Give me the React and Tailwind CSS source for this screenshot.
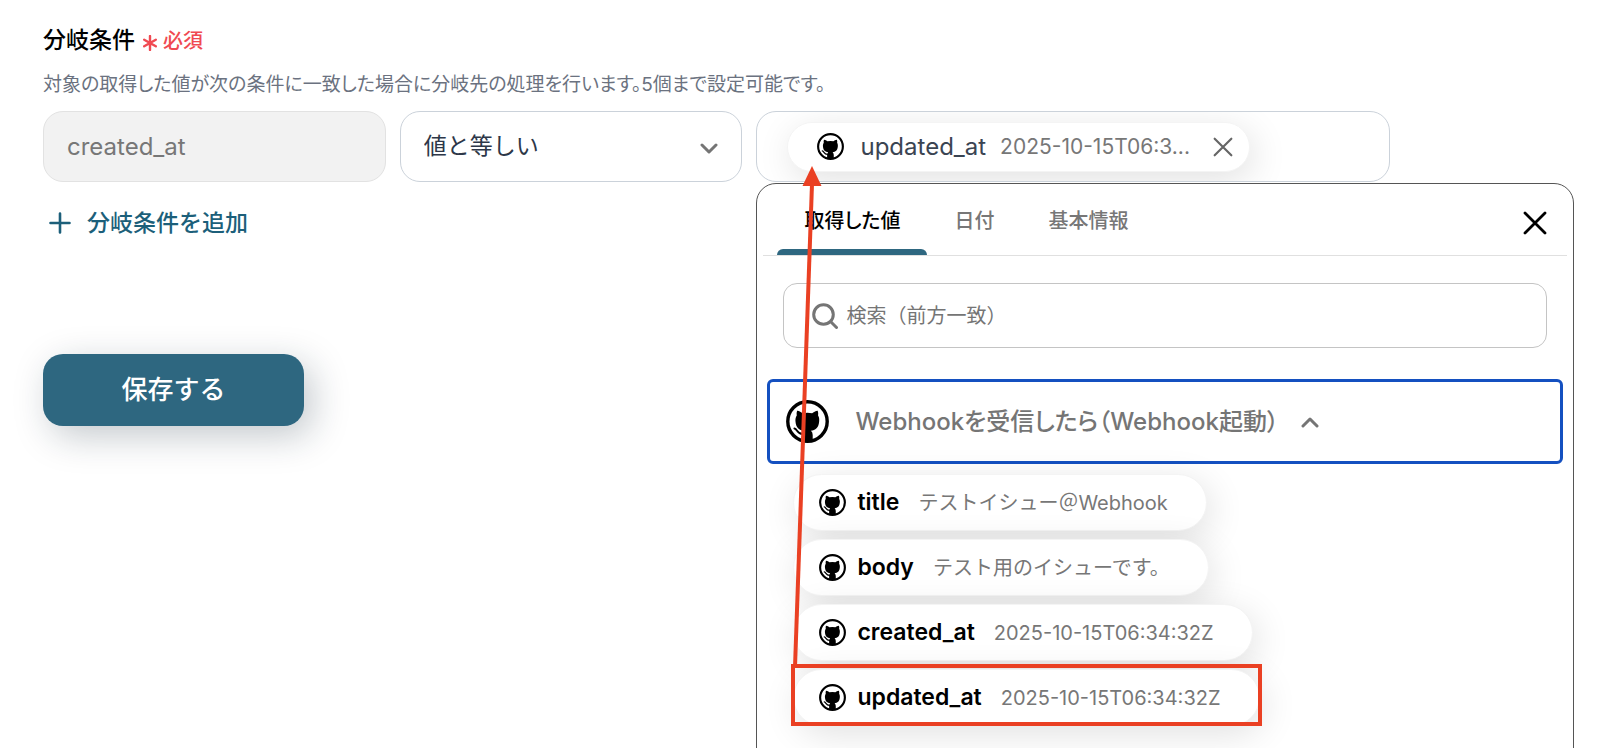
import React from "react";

const chips = [
  { name: "title", value: "テストイシュー＠Webhook" },
  { name: "body", value: "テスト用のイシューです。" },
  { name: "created_at", value: "2025-10-15T06:34:32Z" },
  { name: "updated_at", value: "2025-10-15T06:34:32Z" },
];

function GithubIcon({ className }) {
  return (
    <svg viewBox="0 0 24 24" className={className} aria-hidden="true">
      <circle cx="12" cy="12" r="11" fill="#fff" stroke="#000" strokeWidth="1.9" />
      <path d="M6.200 6C7.200 5.900 8.600 6.900 9.200 7.400Q12 6.900 14.600 7.400C15.300 6.900 16.700 5.900 17.700 6Q18.200 7.400 17.900 8.700C18.600 9.800 18.600 11 18.500 12C18.300 15.400 16.400 16.800 13.900 17.200Q14.900 18 14.900 19.600V23H9V19.600Q9 18 9.900 17.200C7.400 16.800 5.500 15.400 5.300 12C5.200 11 5.300 9.800 6 8.700Q5.700 7.400 6.200 6z" />
      <path d="M4.700 15.900C6.400 16.200 6.200 19.200 9.400 19" fill="none" stroke="#000" strokeWidth="1.1" strokeLinecap="round" />
    </svg>
  );
}

function Cross({ className, width }) {
  return (
    <svg viewBox="0 0 24 24" className={className} fill="none" stroke="currentColor" strokeWidth={width} strokeLinecap="round" aria-hidden="true">
      <path d="M2 2 22 22M22 2 2 22" />
    </svg>
  );
}

function Chevron({ className }) {
  return (
    <svg viewBox="0 0 18 12" className={className} fill="none" stroke="currentColor" strokeWidth="3" strokeLinecap="round" strokeLinejoin="round" aria-hidden="true">
      <path d="M2 2l7 7 7-7" />
    </svg>
  );
}

function ValuePanel() {
  return (
    <div className="absolute top-full left-0 -right-46 mt-px h-[640px] rounded-[20px] border border-[#555] bg-white px-1.5 text-xl">
      <div className="flex h-[72px] items-stretch justify-between border-b border-[#e0e0e0] pt-1.5 pr-5 pl-3.5">
        <div role="tablist" className="flex font-medium text-[#777] [font-feature-settings:'palt']">
          <button role="tab" aria-selected="true" className="relative px-[27px] pb-1 text-black">
            取得した値
            <span className="absolute inset-x-0 bottom-0 h-1.5 rounded-t-md bg-[#2e6780]" />
          </button>
          <button role="tab" aria-selected="false" className="px-[27px] pb-1">日付</button>
          <button role="tab" aria-selected="false" className="px-[27px] pb-1">基本情報</button>
        </div>
        <button aria-label="閉じる" className="flex items-center">
          <Cross className="size-6" width="2.8" />
        </button>
      </div>

      <div className="mx-5 mt-[27px] flex h-[65px] items-center gap-2 rounded-[14px] border border-[#c4c4c4] pl-7 text-[#757575]">
        <svg viewBox="0 0 26 26" className="size-[26px] shrink-0" fill="none" stroke="currentColor" strokeWidth="3" strokeLinecap="round" aria-hidden="true">
          <circle cx="11.5" cy="11.5" r="9.8" />
          <path d="M18.8 18.8 24.5 24.5" />
        </svg>
        <input aria-label="検索" placeholder="検索（前方一致）" className="w-full bg-transparent outline-none placeholder:text-[#757575]" />
      </div>

      <button className="mt-[31px] ml-1 flex h-[85px] w-[calc(100%-8px)] items-center rounded-[6px] border-3 border-[#1450c0] pl-4 text-2xl font-medium text-[#757575]">
        <GithubIcon className="mr-[26px] size-[43px]" />
        <span className="[font-feature-settings:'palt']">Webhookを受信したら（Webhook起動）</span>
        <Chevron className="ml-[22px] h-3 w-[18px] rotate-180" />
      </button>

      <ul className="mt-2.5 flex flex-col items-start gap-2 pl-[30px]">
        {chips.map((c) => (
          <li key={c.name}>
            <button className="flex h-[57px] items-center rounded-full border border-[#f4f4f4] bg-white pr-[38px] pl-[25px] shadow-[4px_8px_36px_rgba(0,0,0,0.12)]">
              <GithubIcon className="mr-[11px] size-[27px]" />
              <span className="text-[23px] font-semibold text-black">{c.name}</span>
              <span className="ml-[19px] text-[#777]">{c.value}</span>
            </button>
          </li>
        ))}
      </ul>

      <svg viewBox="0 0 480 570" className="pointer-events-none absolute -top-5 left-8 h-[570px] w-[480px]" fill="none" stroke="#ea4023" strokeWidth="4" aria-hidden="true">
        <rect x="4" y="502" width="467" height="58" />
        <path d="M6 503 23 20" />
        <path d="M23 2 32.500 22H13.500z" fill="#ea4023" stroke="none" />
      </svg>
    </div>
  );
}

export default function App() {
  return (
    <main className="h-screen overflow-hidden bg-white pt-5 pr-[210px] pl-[43px] font-['Inter','Noto_Sans_CJK_JP',sans-serif]" lang="ja">
      <h1 className="flex h-10 items-center text-[23px] font-medium text-black">
        分岐条件
        <span className="ml-2 flex items-center gap-1.5 pt-px text-xl font-medium text-[#f04a52]">
          <svg viewBox="0 0 14 16" className="mt-1 h-4 w-3.5" fill="none" stroke="currentColor" strokeWidth="2.4" strokeLinecap="round" aria-hidden="true">
            <path d="M7 1v14M1.200 4.700l11.600 6.600M12.800 4.700L1.200 11.300" />
          </svg>
          必須
        </span>
      </h1>
      <p className="mt-2.5 h-[41px] text-[19px] leading-[30px] text-[#6b7280] [font-feature-settings:'palt']">
        対象の取得した値が次の条件に一致した場合に分岐先の処理を行います。5個まで設定可能です。
      </p>

      <div className="grid grid-cols-[343fr_343fr_634fr] gap-3.5 text-2xl">
        <input aria-label="対象" disabled value="created_at" readOnly className="h-[71px] w-full min-w-0 rounded-[20px] border border-[#e2e2e2] bg-[#f2f2f2] px-[23px] text-[#777]" />
        <div className="relative">
          <select aria-label="条件" className="h-[71px] w-full appearance-none rounded-[20px] border border-[#cbd2da] bg-white px-[23px] text-[23px] text-[#2d3748]">
            <option>値と等しい</option>
          </select>
          <Chevron className="pointer-events-none absolute top-8 right-6 h-3 w-[18px] text-[#757575]" />
        </div>
        <div className="relative">
          <div className="flex h-[71px] items-center overflow-hidden rounded-[20px] border border-[#cbd2da] bg-white pl-[30px]">
            <div className="flex h-[50px] items-center rounded-full border border-[#f4f4f4] bg-white pr-4 pl-[29px] shadow-[4px_8px_36px_rgba(0,0,0,0.12)]">
              <GithubIcon className="mr-4 size-[27px]" />
              <span className="text-[#3a4452]">updated_at</span>
              <span className="ml-3.5 text-[21px] text-[#777]">2025-10-15T06:3...</span>
              <button aria-label="削除" className="ml-[23px]">
                <Cross className="size-5 text-[#666]" width="2.6" />
              </button>
            </div>
          </div>
          <ValuePanel />
        </div>
      </div>

      <button className="mt-[21px] ml-1.5 flex h-10 items-center gap-4 text-[23px] font-medium text-[#1c5f7a]">
        <svg viewBox="0 0 22 22" className="size-[22px]" fill="none" stroke="currentColor" strokeWidth="2.6" strokeLinecap="round" aria-hidden="true">
          <path d="M11 1.500v19M1.500 11h19" />
        </svg>
        分岐条件を追加
      </button>

      <button className="mt-[111px] h-18 w-[261px] rounded-[20px] bg-[#2e6780] pb-0.5 text-[26px] font-medium text-white shadow-[8px_10px_36px_rgba(20,40,55,0.25)]">
        保存する
      </button>
    </main>
  );
}
